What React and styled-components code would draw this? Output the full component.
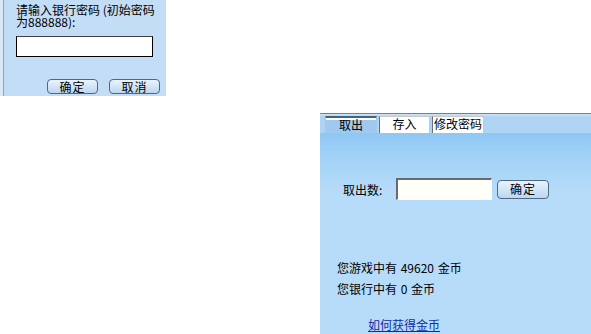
import React from 'react'
import styled, { createGlobalStyle } from 'styled-components'

const Global = createGlobalStyle`
  body {
    margin: 0;
    background: #ffffff;
    font-family: "Noto Sans CJK SC", "DejaVu Sans", sans-serif;
    font-size: 12px;
    color: #000;
  }
`

const Page = styled.div`
  width: 591px;
  height: 334px;
  display: flex;
  flex-direction: column;
  overflow: hidden;
`

const LoginBox = styled.div`
  width: 163px;
  height: 96px;
  background: #c4ddf6;
  border-left: 1px solid #7ea9d6;
  box-shadow: -3px 0 0 #d9e8f8;
  margin-left: 3px;
  padding: 4px 0 0 12px;
  box-sizing: border-box;
  display: flex;
  flex-direction: column;
`

const Prompt = styled.div`
  line-height: 12px;
  font-size: 12px;
  width: 140px;
`

const TextBox = styled.input`
  width: 137px;
  height: 21px;
  box-sizing: border-box;
  margin-top: 8px;
  border: 1px solid #000;
  border-top-color: #404040;
  background: #fff;
  outline: none;
  padding: 0;
`

const ButtonRow = styled.div`
  display: flex;
  gap: 11px;
  margin: 22px 0 0 ${p => p.$indent || 0}px;
`

const Btn = styled.button`
  width: ${p => p.$w || 51}px;
  height: ${p => p.$h || 15}px;
  padding: 0;
  border: 1px solid #4d6a85;
  border-radius: 4px;
  background: linear-gradient(#eaf3fc, #bcd7f0);
  font-family: "Noto Sans CJK SC", sans-serif;
  font-size: 12px;
  line-height: 12px;
  color: #000;
  letter-spacing: 1px;
`

const Bank = styled.div`
  width: 271px;
  height: 221px;
  margin: 17px 0 0 320px;
  display: flex;
  flex-direction: column;
  background: linear-gradient(#7cbff1 0px, #9fd0f6 40px, #b7dcf9 80px, #b7dcf9 100%);
`

const TabBar = styled.div`
  height: 20px;
  border-top: 1px solid #5d87ad;
  background: linear-gradient(#cfe5f8 0px, #aed3f3 3px, #aed3f3 100%);
  display: flex;
  align-items: flex-end;
  padding-left: 5px;
  gap: 2px;
  box-sizing: border-box;
  flex: none;
`

const Tab = styled.div`
  width: ${p => p.$w || 51}px;
  height: 17px;
  box-sizing: border-box;
  text-align: center;
  line-height: 14px;
  font-size: 12px;
  background: ${p => (p.$active ? '#9fc9ee' : '#ffffff')};
  border-top: ${p => (p.$active ? '2px solid #3d6487' : '1px solid #c8c8c8')};
  border-left: 1px solid ${p => (p.$active ? '#9fc9ee' : '#6f6f6f')};
  border-right: 1px solid ${p => (p.$active ? '#9fc9ee' : '#c8c8c8')};
  box-shadow: ${p => (p.$active ? 'inset 0 2px 0 #ffffff' : 'none')};
`

const Body = styled.div`
  display: flex;
  flex-direction: column;
  padding: 45px 0 0 17px;
`

const Field = styled.div`
  display: flex;
  align-items: center;
  padding-left: 6px;
`

const Label = styled.span`
  width: 53px;
`

const AmountBox = styled.input`
  width: 96px;
  height: 22px;
  box-sizing: border-box;
  border: 1px solid #fffbee;
  border-top: 2px solid #6a6a6a;
  border-left: 2px solid #6a6a6a;
  background: #fffef8;
  outline: none;
  padding: 0;
  margin-right: 5px;
`

const Info = styled.div`
  margin-top: ${p => p.$top || 0}px;
  line-height: 12px;
  font-size: 12px;
  word-spacing: 1px;
`

const Link = styled.a`
  margin: 24px 0 0 31px;
  color: #0c2fa6;
  text-decoration: underline;
  font-size: 12px;
  line-height: 12px;
`

export default function App() {
  return (
    <Page>
      <Global />
      <LoginBox>
        <Prompt>请输入银行密码 (初始密码为888888):</Prompt>
        <TextBox />
        <ButtonRow $indent={31}>
          <Btn>确定</Btn>
          <Btn>取消</Btn>
        </ButtonRow>
      </LoginBox>
      <Bank>
        <TabBar>
          <Tab $active $w={52}>取出</Tab>
          <Tab>存入</Tab>
          <Tab $w={52}>修改密码</Tab>
        </TabBar>
        <Body>
          <Field>
            <Label>取出数:</Label>
            <AmountBox />
            <Btn $w={52} $h={19}>确定</Btn>
          </Field>
          <Info $top={62}>您游戏中有 49620 金币</Info>
          <Info $top={9}>您银行中有 0 金币</Info>
          <Link href="#">如何获得金币</Link>
        </Body>
      </Bank>
    </Page>
  )
}
